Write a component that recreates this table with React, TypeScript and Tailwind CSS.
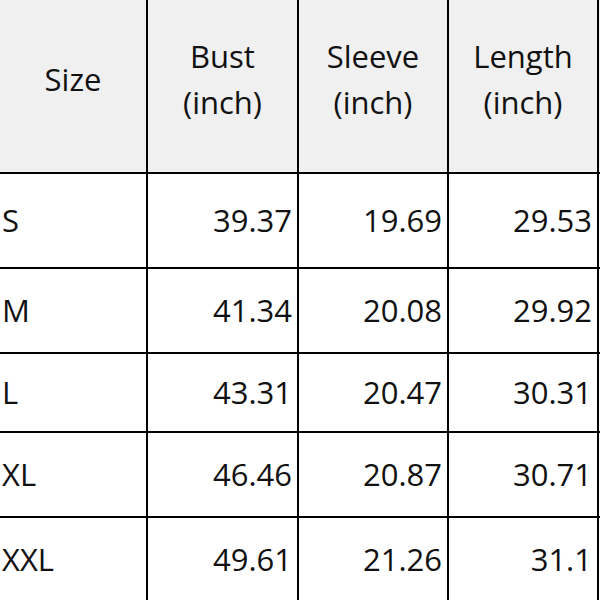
const rows = [
  { size: "S", bust: "39.37", sleeve: "19.69", length: "29.53", h: "h-[95px] border-b-2" },
  { size: "M", bust: "41.34", sleeve: "20.08", length: "29.92", h: "h-[85px] border-b-2" },
  { size: "L", bust: "43.31", sleeve: "20.47", length: "30.31", h: "h-[79px] border-b-2" },
  { size: "XL", bust: "46.46", sleeve: "20.87", length: "30.71", h: "h-[85px] border-b-2" },
  { size: "XXL", bust: "49.61", sleeve: "21.26", length: "31.1", h: "h-[84px] pb-[2px]" },
];

const cols = ["w-[148px]", "w-[151px]", "w-[150px]", "w-[150px]"];

function HeaderCell({ w, lines }: { w: string; lines: string[] }) {
  return (
    <div
      className={`${w} h-full shrink-0 border-r-2 border-black flex flex-col items-center justify-center pb-[14px] leading-[46px]`}
    >
      {lines.map((l) => (
        <span key={l}>{l}</span>
      ))}
    </div>
  );
}

export default function App() {
  return (
    <div
      className="w-[600px] h-[600px] overflow-hidden bg-white text-[#111] text-[31px]"
      style={{ fontFamily: '"Open Sans", "Noto Sans", sans-serif' }}
    >
      <div className="flex h-[174px] bg-[#f0f0f0] border-b-2 border-black">
        <HeaderCell w={cols[0]} lines={["Size"]} />
        <HeaderCell w={cols[1]} lines={["Bust", "(inch)"]} />
        <HeaderCell w={cols[2]} lines={["Sleeve", "(inch)"]} />
        <HeaderCell w={cols[3]} lines={["Length", "(inch)"]} />
      </div>
      {rows.map((r) => (
        <div key={r.size} className={`flex ${r.h} border-black`}>
          <div className={`${cols[0]} shrink-0 border-r-2 border-black flex items-center pl-[2px]`}>
            {r.size}
          </div>
          <div className={`${cols[1]} shrink-0 border-r-2 border-black flex items-center justify-end pr-[5px]`}>
            {r.bust}
          </div>
          <div className={`${cols[2]} shrink-0 border-r-2 border-black flex items-center justify-end pr-[5px]`}>
            {r.sleeve}
          </div>
          <div className={`${cols[3]} shrink-0 border-r-2 border-black flex items-center justify-end pr-[5px]`}>
            {r.length}
          </div>
        </div>
      ))}
    </div>
  );
}
